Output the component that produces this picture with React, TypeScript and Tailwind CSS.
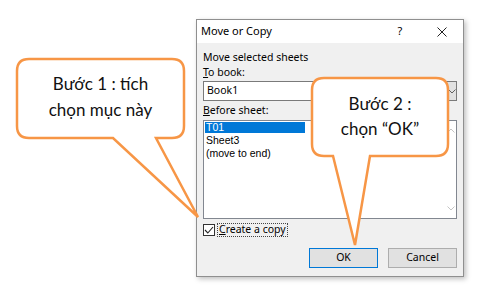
import React from "react";

const ui = { fontFamily: '"Noto Sans", "Open Sans", sans-serif' };
const listFont = { fontFamily: '"Liberation Sans", Arial, sans-serif' };
const callFont = { fontFamily: 'Lato, "Noto Sans", sans-serif' };

function Chevron({ dir, color }: { dir: "up" | "down"; color: string }) {
  return (
    <svg width="8" height="5" viewBox="0 0 8 5">
      <path
        d={dir === "down" ? "M0.5 0.5 L4 4 L7.5 0.5" : "M0.5 4.5 L4 1 L7.5 4.5"}
        fill="none"
        stroke={color}
        strokeWidth="1"
      />
    </svg>
  );
}

export default function App() {
  return (
    <div className="relative h-[285px] w-[484px] overflow-hidden bg-white pl-[196px] pt-[19px]">
      {/* Dialog */}
      <div
        className="flex h-[258px] w-[268px] flex-col border border-[#8f8f8f] bg-[#f0f0f0] text-[10.5px] text-black shadow-[2px_2px_5px_rgba(0,0,0,0.25)]"
        style={ui}
      >
        <div className="flex h-[23px] items-center bg-white pl-[4px] pr-[14px]">
          <span className="flex-1 text-[11px]">Move or Copy</span>
          <span className="w-[14px] text-center text-[11px]">?</span>
          <span className="ml-[28px] flex w-[14px] justify-center">
            <svg width="10" height="10" viewBox="0 0 10 10">
              <path d="M0.5 0.5 L9.5 9.5 M9.5 0.5 L0.5 9.5" stroke="#222" strokeWidth="1" />
            </svg>
          </span>
        </div>

        <div className="flex flex-1 flex-col px-[6px] pt-[7px]">
          <div className="h-[14px] leading-[14px]">Move selected sheets</div>
          <div className="mt-[1px] h-[14px] leading-[14px]">
            <span className="underline">T</span>o book:
          </div>
          <div className="mt-[2px] flex h-[20px] border border-[#7a7a7a] bg-white">
            <div className="flex flex-1 items-center pl-[3px]">Book1</div>
            <div className="flex w-[10px] items-center justify-center border-l border-[#adadad] bg-[#e1e1e1]">
              <Chevron dir="down" color="#606060" />
            </div>
          </div>
          <div className="mt-[2px] h-[14px] leading-[14px]">
            <span className="underline">B</span>efore sheet:
          </div>
          <div className="mt-[3px] flex h-[99px] border border-[#828790] bg-white">
            <div className="flex flex-1 flex-col pl-[1px] pt-[1px] text-[10.5px] leading-[12.5px]" style={listFont}>
              <div className="h-[11px] w-[100px] bg-[#0078d7] pl-[1px] leading-[11px] text-white">T01</div>
              <div className="mt-[1px] h-[12.5px] pl-[1px]">Sheet3</div>
              <div className="h-[12.5px] pl-[1px]">(move to end)</div>
            </div>
            <div className="flex w-[10px] flex-col items-center justify-between py-[7px]">
              <Chevron dir="up" color="#c4c4c4" />
              <Chevron dir="down" color="#c4c4c4" />
            </div>
          </div>

          <div className="mt-[4px] flex h-[14px] items-center">
            <div className="flex h-[12px] w-[12px] items-center justify-center border border-[#333] bg-white">
              <svg width="10" height="8" viewBox="0 0 10 8">
                <path d="M1 4 L3.8 7 L9 1" fill="none" stroke="#222" strokeWidth="1.1" />
              </svg>
            </div>
            <div className="ml-[2px] flex h-[14px] items-center border border-dotted border-[#444] px-[1px]">
              <span className="underline">C</span>reate a copy
            </div>
          </div>

          <div className="mt-[11px] flex justify-end gap-[10px]">
            <div className="flex h-[20px] w-[69px] items-center justify-center border border-[#0078d7] bg-[#e1e1e1]">
              OK
            </div>
            <div className="flex h-[20px] w-[69px] items-center justify-center border border-[#adadad] bg-[#e1e1e1]">
              Cancel
            </div>
          </div>
        </div>
      </div>

      {/* Callout shapes */}
      <svg className="pointer-events-none absolute left-0 top-0" width="484" height="285">
        <path
          d="M29 59 H172 Q184 59 184 71 V126 Q184 138 172 138 H156 L198 217 L113 138 H29 Q17 138 17 126 V71 Q17 59 29 59 Z"
          fill="white"
          stroke="#f79646"
          strokeWidth="2.5"
          strokeLinejoin="miter"
        />
        <path
          d="M324 78 H436 Q448 78 448 90 V144 Q448 156 436 156 H370 L355 245 L333 156 H324 Q312 156 312 144 V90 Q312 78 324 78 Z"
          fill="white"
          stroke="#f79646"
          strokeWidth="2.5"
        />
      </svg>

      {/* Callout texts */}
      <div
        className="absolute left-[17px] top-[59px] flex h-[76px] w-[167px] flex-col items-center justify-center text-[17px] leading-[26px] text-[#111]"
        style={callFont}
      >
        <span>Bước 1 : tích</span>
        <span>chọn mục này</span>
      </div>
      <div
        className="absolute left-[312px] top-[78px] flex h-[75px] w-[136px] flex-col items-center justify-center text-[17px] leading-[25px] text-[#111]"
        style={callFont}
      >
        <span>Bước 2 :</span>
        <span>chọn “OK”</span>
      </div>
    </div>
  );
}
